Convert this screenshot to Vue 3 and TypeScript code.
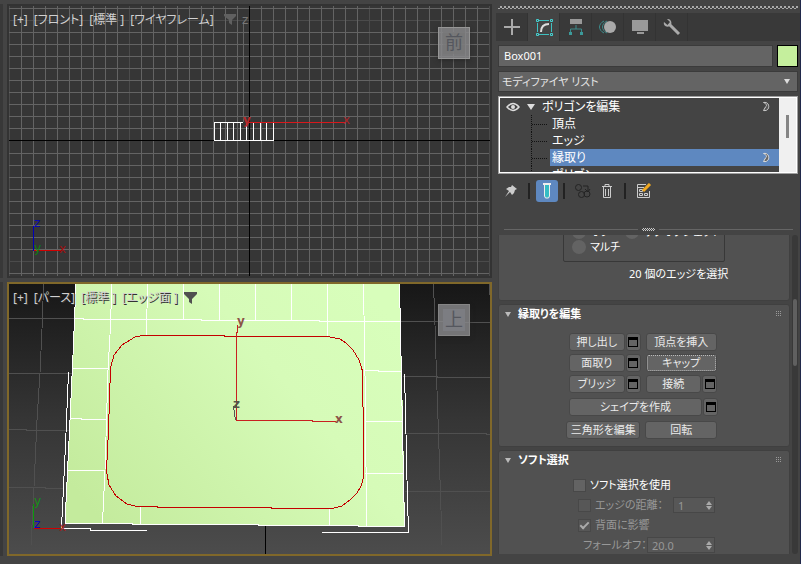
<script setup lang="ts">
import { ref } from 'vue'

interface Sub { name: string; selected: boolean }

const range = (from: number, to: number, step: number): number[] => {
  const out: number[] = []
  for (let v = from; v <= to; v += step) out.push(v)
  return out
}

// Front view grid: the origin lies at (249, 140)
const gridX = range(9, 489, 12).filter((x) => x !== 249)
const gridY = [...range(8, 128, 12), ...range(153, 273, 12)]
const isMajorX = (x: number) => (x - 9) % 120 === 0
const isMajorY = (y: number) => y === 20 || y === 261
const boxX = [214, 220, 227, 233, 240, 246, 253, 260, 266, 273]

const frontLabels = ['[+]', '[フロント]', '[標準 ]', '[ワイヤフレーム]']
const perspLabels = ['[+]', '[パース]', '[標準 ]', '[エッジ面 ]']

const objectName = ref('Box001')
const subs: Sub[] = [
  { name: '頂点', selected: false },
  { name: 'エッジ', selected: false },
  { name: '縁取り', selected: true },
  { name: 'ポリゴン', selected: false },
]
const pick = ref('')
const useSoft = ref(false)
const edgeDistance = ref('1')
const falloff = ref('20.0')
</script>

<template>
  <div class="app">
    <div class="strip"><i></i><i></i></div>

    <main class="views">
      <section class="view">
        <svg class="scene" viewBox="9 6 481 270" preserveAspectRatio="xMidYMid slice" shape-rendering="crispEdges">
          <rect x="9" y="6" width="481" height="270" fill="#363636" />
          <rect v-for="x in gridX.filter(isMajorX)" :key="'mx' + x" :x="x" y="6" width="1" height="270" fill="#4b4b4b" />
          <rect v-for="y in gridY.filter(isMajorY)" :key="'my' + y" x="9" :y="y" width="481" height="1" fill="#4b4b4b" />
          <rect v-for="x in gridX.filter((v) => !isMajorX(v))" :key="'x' + x" :x="x" y="6" width="1" height="270" fill="#646464" />
          <rect v-for="y in gridY.filter((v) => !isMajorY(v))" :key="'y' + y" x="9" :y="y" width="480" height="1" fill="#646464" />
          <rect x="249" y="6" width="1" height="270" fill="#000" />
          <rect x="9" y="140" width="481" height="1" fill="#000" />
          <rect x="243" y="22" width="1" height="100" fill="#646464" />
          <g fill="#fff">
            <rect v-for="x in boxX" :key="'b' + x" :x="x" y="122" width="1" height="19" />
            <rect x="214" y="122" width="29" height="1" />
            <rect x="214" y="140" width="60" height="1" />
          </g>
          <rect x="247" y="122" width="98" height="1" fill="#d8181c" />
          <rect x="33" y="226" width="1" height="25" fill="#0000b8" />
          <rect x="34" y="250" width="27" height="1" fill="#d00000" />
          <g class="axis">
            <text x="242" y="24" fill="#777">z</text>
            <text x="243" y="124" fill="#b8292c" class="strong">y</text>
            <text x="343" y="124" fill="#a82428">x</text>
            <text x="34" y="227" fill="#0808b0">z</text>
            <text x="34" y="252" fill="#108010">y</text>
            <text x="59" y="253" fill="#a01010">x</text>
          </g>
        </svg>
        <div class="labels">
          <button v-for="t in frontLabels" :key="t">{{ t }}</button>
          <button class="filter dim" aria-label="フィルタ">
            <svg width="13" height="12" viewBox="0 0 13 12"><path d="M0 0h12v2L8 6v5l-3-2V6L0 2z" /></svg>
          </button>
        </div>
        <button class="cube front"><span>前</span></button>
      </section>

      <section class="view active">
        <svg class="scene" viewBox="9 284 481 270" preserveAspectRatio="xMidYMid slice" shape-rendering="crispEdges">
          <defs>
            <linearGradient id="sky" x1="0" y1="0" x2="0" y2="1">
              <stop offset="0" stop-color="#171717" />
              <stop offset=".5" stop-color="#353535" />
              <stop offset="1" stop-color="#4c4c4c" />
            </linearGradient>
            <linearGradient id="face" x1="0" y1=".8" x2="1" y2=".2">
              <stop offset="0" stop-color="#c4eb9d" />
              <stop offset=".65" stop-color="#d6fbb8" />
              <stop offset="1" stop-color="#d8febb" />
            </linearGradient>
          </defs>
          <rect x="9" y="284" width="481" height="270" fill="url(#sky)" />
          <g fill="none" stroke="#505050">
            <path d="M9 318.500H75M9 373.500H72M9 429.500H26V430.500H70M9 487.500H45V488.500H64" />
            <path d="M43.500 284L42.500 318L40 373L37 420L34 487L31 545" />
            <path d="M399 321.500H464V322.500H490M403 376.500H437V377.500H490M404 433.500H486V434.500H490M405 491.500H490" />
            <path d="M433.500 284L435 325L436.500 376L438.500 433L441 510L442 545M489.500 284V295" />
          </g>
          <path d="M265.500 525V554" stroke="#000" />
          <path d="M76 284H399L402 374L405 526L65 524L70 420Z" fill="url(#face)" />
          <g fill="none" stroke="#fff">
            <path d="M76 284L73 355L70 420L65 523.500M399.500 284L400.500 330L402.500 430L404.500 526" />
            <path d="M68.500 372L65.500 445L61.500 528M404.500 374L405.500 410L407 480L408.500 532.500" />
            <path d="M65 523.500H132V524.500H258V525.500H358V526.500H405" />
            <path d="M61 528.500H90V530.500H147M322 532.500H409" />
            <path d="M112 284L110 335L108 370L106.500 420L105 470L102.500 523" />
            <path d="M147.500 284L146.500 335M183.500 284V319M219.500 284V320M255.500 284V320M291.500 284V320M327.500 284V336M363.500 284L364.500 345L365.500 405L366.500 526" />
            <path d="M75 318.500H83V319.500H201V320.500H319V321.500H400" />
            <path d="M73 368.500H109M70 418.500H81V419.500H106M67 470.500H105M364 370.500H378V371.500H402M366 421.500H403M365 473.500H404" />
            <path d="M140.500 507V524M329.500 508V525" />
          </g>
          <path
            d="M143 335.500H224V336.500H328L340 339L346 343L353 350L359 360L362.500 371V406L363.500 408V470L364 476L361 486L357 493L350 500L342 506L332 508.500H271V507.500H157V506.500H137L127 504L116 496L109 485L106.500 471L108.500 430L110.500 368L114 355L122 345L135 337Z"
            fill="none" stroke="#c40000"
          />
          <path d="M237.500 325V332H236.500V420.500H312V421.500H336" fill="none" stroke="#c82020" />
          <path d="M233.500 406L235.500 420" stroke="#555" />
          <path d="M33.500 504V528" stroke="#0a9a0a" />
          <path d="M34 528.500H60" stroke="#d00000" />
          <g class="axis">
            <text x="237" y="325" fill="#8c5348" class="strong">y</text>
            <text x="233" y="408" fill="#505548" class="strong">z</text>
            <text x="335" y="423" fill="#8c5348" class="strong">x</text>
            <text x="34" y="505" fill="#189018">y</text>
            <text x="34" y="528" fill="#0808c0">z</text>
            <text x="59" y="531" fill="#a01818">x</text>
          </g>
        </svg>
        <div class="labels shaded">
          <button v-for="t in perspLabels" :key="t">{{ t }}</button>
          <button class="filter" aria-label="フィルタ">
            <svg width="13" height="12" viewBox="0 0 13 12"><path d="M0 0h13v2L8 7v5l-3-2V7L0 2z" /></svg>
          </button>
        </div>
        <button class="cube top"><span>上</span></button>
      </section>
    </main>

    <aside class="panel">
      <div class="grip"></div>
      <nav class="tabs">
        <button aria-label="作成">
          <svg width="20" height="20"><path d="M10 2v16M2 10h16" stroke="#aaa" stroke-width="2" /></svg>
        </button>
        <button class="on" aria-label="修正">
          <svg width="20" height="20" fill="none">
            <path d="M5 3.500h10M5 17.500h10M3.500 6v9M17.500 6v9" stroke="#3fc0c0" />
            <path d="M2.500 2.500h2v2h-2zM16.500 2.500h2v2h-2zM2.500 16.500h2v2h-2zM16.500 16.500h2v2h-2z" stroke="#45d0d0" />
            <path d="M7 15C7 10 9 7 15 7" stroke="#ddd" stroke-width="2" />
          </svg>
        </button>
        <button aria-label="階層">
          <svg width="20" height="20">
            <path d="M4 2h12v5H4z" fill="#999" />
            <path d="M10 8v4M4.500 16v-4h11v4" fill="none" stroke="#3c8c8c" />
            <path d="M3 15h3v3H3zM14 15h3v3h-3z" fill="#3c9a9a" />
          </svg>
        </button>
        <button aria-label="モーション">
          <svg width="20" height="20" fill="none">
            <path d="M6 4C0 7 0 13 6 16M9 4C3 7 3 13 9 16" stroke="#3c8c8c" />
            <circle cx="12" cy="10" r="6" fill="#aaa" />
          </svg>
        </button>
        <button aria-label="表示">
          <svg width="20" height="20" fill="#999"><path d="M2 3h16v11H2zM7 15h7v2H7z" /></svg>
        </button>
        <button aria-label="ユーティリティ">
          <svg width="20" height="20">
            <path d="M7 7l10 10" stroke="#aaa" stroke-width="3" />
            <path d="M5 2L8 5L5.500 8L2 5C1 8 4 11 8 9C11 7 9 1 5 2Z" fill="#aaa" />
          </svg>
        </button>
      </nav>

      <div class="name-row">
        <input v-model="objectName" type="text" aria-label="オブジェクト名" />
        <button class="swatch" aria-label="オブジェクトカラー"></button>
      </div>

      <div class="drop">
        <select v-model="pick" aria-label="モディファイヤ リスト">
          <option value="">モディファイヤ リスト</option>
        </select>
        <svg width="6" height="5"><path d="M0 0h6L3 5z" fill="#ddd" /></svg>
      </div>

      <div class="stack">
        <ul>
          <li class="root">
            <svg class="eye" width="14" height="10" viewBox="0 0 14 10">
              <path d="M1 5Q7-2 13 5Q7 12 1 5Z" fill="none" stroke="#ddd" stroke-width="1.500" />
              <circle cx="7" cy="5" r="2" fill="#ddd" />
            </svg>
            <svg class="tri" width="8" height="6"><path d="M0 0h8L4 6z" fill="#ddd" /></svg>
            <button>ポリゴンを編集</button>
            <svg class="moon" width="8" height="11"><path d="M1.500 1.500C5 3 5 5 3.500 6L1.500 9.500C8.500 11 8.500 0 1.500 1.500Z" fill="#555" stroke="#ccc" /></svg>
          </li>
          <li v-for="s in subs" :key="s.name" class="sub">
            <i></i>
            <button :class="{ on: s.selected }">{{ s.name }}
              <svg v-if="s.selected" class="moon" width="8" height="11"><path d="M1.500 1.500C5 3 5 5 3.500 6L1.500 9.500C8.500 11 8.500 0 1.500 1.500Z" fill="#666" stroke="#ddd" /></svg>
            </button>
          </li>
        </ul>
        <div class="bar"><i></i></div>
      </div>

      <div class="tools">
        <button aria-label="スタックを固定">
          <svg width="16" height="16"><path d="M9 2l5 4-2 1-1 3-2 2-2-3-5 5 4-6-3-2 3-2 2 0z" fill="#ccc" /></svg>
        </button>
        <b></b>
        <button class="on" aria-label="最終結果を表示">
          <svg width="10" height="16"><path d="M2.500 1v12l1 2h3l1-2V1z" fill="#35bcc4" stroke="#eee" /><path d="M1 1h8" stroke="#eee" stroke-width="2" /></svg>
        </button>
        <b></b>
        <button aria-label="固有にする">
          <svg width="18" height="16" fill="none" stroke="#232323"><circle cx="4.500" cy="4.500" r="3" /><circle cx="7.500" cy="11.500" r="3" /><circle cx="13" cy="11" r="3" /><path d="M9 3h5v5M11 6l3 3 2-3" /></svg>
        </button>
        <button aria-label="モディファイヤを除去">
          <svg width="12" height="16" fill="none" stroke="#ccc"><path d="M1 3.500h10M4 3V1.500h4V3M2.500 4v10.500h7V4M4.500 6v7M7.500 6v7" /></svg>
        </button>
        <b></b>
        <button aria-label="モディファイヤ セットを設定">
          <svg width="16" height="16" fill="none" stroke="#ccc"><path d="M10 1.500H1.500v13h12V8M2 4.500h6M3.500 6.500h3v2h-3zM3.500 10.500h3v2h-3zM8.500 10.500h3v2h-3z" /><path d="M7 8l7-7" stroke="#f0a820" stroke-width="3" /></svg>
        </button>
      </div>

      <div class="splitter"><i></i><span></span><i></i></div>

      <div class="scroller">
        <div class="rolls">
          <section class="roll selection">
            <div class="group">
              <label><input type="radio" name="preview" />オフ</label>
              <label><input type="radio" name="preview" />サブオブジェクト</label>
              <label><input type="radio" name="preview" />マルチ</label>
            </div>
            <p>20 個のエッジを選択</p>
          </section>

          <section class="roll">
            <h2><svg width="6" height="5"><path d="M0 0h6L3 5z" /></svg>縁取りを編集<span class="dots"></span></h2>
            <div class="edit">
              <div class="pair">
                <div class="half"><button>押し出し</button><button class="mini" aria-label="押し出し設定"></button></div>
                <div class="half"><button>頂点を挿入</button></div>
              </div>
              <div class="pair">
                <div class="half"><button>面取り</button><button class="mini" aria-label="面取り設定"></button></div>
                <div class="half"><button class="focus">キャップ</button></div>
              </div>
              <div class="pair">
                <div class="half"><button>ブリッジ</button><button class="mini" aria-label="ブリッジ設定"></button></div>
                <div class="half"><button>接続</button><button class="mini" aria-label="接続設定"></button></div>
              </div>
              <div class="pair spaced">
                <div class="full"><button>シェイプを作成</button><button class="mini" aria-label="シェイプ設定"></button></div>
              </div>
              <div class="pair wide">
                <div class="half first"><button>三角形を編集</button></div>
                <div class="half"><button>回転</button></div>
              </div>
            </div>
          </section>

          <section class="roll soft">
            <h2><svg width="6" height="5"><path d="M0 0h6L3 5z" /></svg>ソフト選択<span class="dots"></span></h2>
            <div class="line"><label><input v-model="useSoft" type="checkbox" />ソフト選択を使用</label></div>
            <div class="line inner">
              <label><input type="checkbox" disabled />エッジの距離：</label>
              <div class="spin short"><input v-model="edgeDistance" type="text" disabled aria-label="エッジの距離" /><svg width="6" height="9"><path d="M0 4h6L3 0zM0 5h6L3 9z" /></svg></div>
            </div>
            <div class="line inner"><label><input type="checkbox" checked disabled />背面に影響</label></div>
            <div class="line fall">
              <label for="falloff">フォールオフ：</label>
              <div class="spin"><input id="falloff" v-model="falloff" type="text" disabled /><svg width="6" height="9"><path d="M0 4h6L3 0zM0 5h6L3 9z" /></svg></div>
            </div>
          </section>
        </div>
        <div class="track"><i></i></div>
      </div>
    </aside>
  </div>
</template>

<style>
body { background: #444; }
</style>

<style scoped>
*, *::before, *::after { box-sizing: border-box; }
.app {
  display: grid;
  grid-template-columns: 3px minmax(0, 1fr) 309px;
  height: 100vh;
  overflow: hidden;
  background: #444;
  color: #fff;
  font: 11px/16px "Noto Sans", "Noto Sans CJK JP", sans-serif;
  font-feature-settings: "palt";
}
button, input, select {
  margin: 0;
  padding: 0;
  border: 0;
  color: inherit;
  font: inherit;
  font-feature-settings: inherit;
  background: none;
}
button { white-space: nowrap; }
svg { display: block; }

.strip { display: flex; flex-direction: column; gap: 4px; padding: 4px 0 8px; }
.strip i { flex: 1; background: #383838; }
.views { display: flex; flex-direction: column; gap: 4px; min-width: 0; padding: 4px 0 8px 4px; }
.view { position: relative; flex: 1; min-height: 0; border: 2px solid #333; }
.view.active { border-color: #80682a; }
.scene { width: 100%; height: 100%; }
.axis { font: 12px "DejaVu Sans", sans-serif; }
.strong { font-weight: bold; }
.labels { position: absolute; top: 6px; left: 4px; display: flex; gap: 6px; align-items: center; }
.labels button { color: #d0d0d0; font-size: 12px; }
.shaded button { text-shadow: 1px 1px #333; }
.filter svg { fill: #505050; }
.labels .dim { margin-left: 4px; }
.dim svg { fill: #606060; }
.cube {
  position: absolute;
  top: 21px;
  right: 20px;
  width: 32px;
  height: 32px;
  padding: 4px;
  border: 1px solid #969696;
  background: #88888ad0;
  color: #55575e;
  box-shadow: 0 2px 4px #2228;
}
.cube span { display: block; height: 22px; background: #7779; font-size: 18px; line-height: 21px; }
.cube.top { top: 20px; border-color: #858585; }
.cube.top span { background: #7c7d82; }

.panel {
  display: flex;
  flex-direction: column;
  min-height: 0;
  padding: 6px 2px 10px 6px;
  border-right: 1px solid #20284a;
}
.grip {
  flex: none;
  height: 3px;
  background: conic-gradient(#aaa 25%, #0000 0 50%, #aaa 0 75%, #0000 0) 0 0 / 4px 4px;
}
.tabs { display: flex; flex: none; height: 28px; margin: 4px -2px 4px; background: #393939; }
.tabs button { display: grid; place-items: center; width: 32px; border-right: 1px solid #333; }
.tabs .on { background: #444; }
.name-row { display: flex; flex: none; gap: 4px; height: 22px; }
.name-row input { flex: 1; min-width: 0; padding: 0 5px; border: 1px solid #3b3b3b; background: #646464; }
.swatch { width: 21px; border: 1px solid #000; background: #c5ef9d; }
.drop { position: relative; flex: none; height: 21px; margin: 4px 0; }
.drop select { width: 100%; height: 100%; padding: 0 3px; border: 1px solid #3b3b3b; background: #646464; appearance: none; color: #e4e4e4; }
.drop svg { position: absolute; right: 8px; top: 8px; }

.stack { display: flex; flex: none; height: 78px; border: 1px solid #a0a0a0; outline: 1px solid #fff; outline-offset: -2px; padding: 1px; }
.stack ul { flex: 1; margin: 0; padding: 0; overflow: hidden; list-style: none; }
.stack li { display: flex; align-items: center; height: 17px; }
.root { gap: 7px; padding: 0 9px 0 6px; }
.moon { margin-left: auto; }
.sub { padding-left: 31px; }
.sub i { width: 17px; height: 17px; border-left: 1px dotted #111; background: linear-gradient(90deg, #111 50%, #0000 0) 0 9px / 2px 1px repeat-x; }
.sub button { display: flex; flex: 1; align-items: center; height: 17px; margin-left: 2px; padding: 0 9px 0 2px; text-align: left; }
.stack button { font-size: 12px; }
.sub .on { background: #5e88c0; }
.bar { width: 17px; padding: 17px 7px; background: #f0f0f0; }
.bar i { display: block; width: 3px; height: 23px; background: #858585; }

.tools { display: flex; flex: none; align-items: center; height: 22px; margin-top: 6px; padding-left: 1px; }
.tools button { display: grid; place-items: center; width: 24px; height: 22px; }
.tools .on { width: 22px; border-radius: 3px; background: #5e88c0; }
.tools b { width: 2px; height: 16px; margin: 0 6px 0 5px; background: #222; }
.splitter { display: flex; flex: none; gap: 4px; align-items: center; height: 4px; margin: 25px 5px 4px 6px; }
.splitter i { flex: 1; height: 1px; background: #656565; }
.splitter span { width: 13px; height: 3px; background: conic-gradient(#ccc 25%, #0000 0 50%, #ccc 0 75%, #0000 0) 0 0 / 2px 2px; }

.scroller { display: flex; flex: 1; gap: 2px; min-height: 0; overflow: hidden; }
.rolls { display: flex; flex: 1; flex-direction: column; gap: 3px; overflow: hidden; }
.roll { flex: none; border: 1px solid #404040; border-radius: 3px; background: #515151; }
.selection { height: 89px; margin-top: -23px; }
.group { display: grid; grid-template-columns: 53px 1fr; grid-auto-rows: 15px; width: 162px; height: 49px; margin-left: 64px; padding: 10px 8px; border: 1px solid #383838; border-radius: 2px; }
.group label { display: flex; gap: 4px; align-items: center; white-space: nowrap; }
.group input { flex: none; width: 14px; height: 14px; border-radius: 50%; background: #636363; appearance: none; }
.selection p { margin: 4px 0 0 130px; }
.roll h2 { display: flex; gap: 7px; align-items: center; height: 18px; margin: 0; padding: 0 7px 0 6px; font-size: 11px; }
.roll h2 svg { fill: #bbb; }
.dots { width: 6px; height: 6px; margin-left: auto; background: conic-gradient(#0000 75%, #999 0) 0 0 / 2px 2px; }
.edit { display: flex; flex-direction: column; gap: 3px; padding: 10px 72px 7px 70px; }
.pair { display: flex; gap: 5px; height: 18px; }
.spaced, .wide { margin-top: 2px; }
.wide { margin-left: -3px; }
.half { display: flex; gap: 1px; width: 72px; }
.half.first { width: 75px; }
.full { display: flex; flex: none; gap: 1px; width: 149px; }
.edit button { flex: 1; border: 1px solid #484848; border-radius: 3px; background: #646464; color: #eaeaea; line-height: 14px; }
.edit .focus { outline: 1px dotted #bbb; outline-offset: -2px; }
.edit .mini { display: grid; flex: none; place-items: center; width: 15px; }
.mini::before { width: 10px; height: 10px; border: 1px solid #000; border-top-width: 3px; content: ""; }

.soft { height: 150px; }
.line { display: flex; align-items: center; justify-content: space-between; height: 20px; padding: 0 74px; color: #fff; }
.soft h2 + .line { margin-top: 6px; }
.line label { display: flex; gap: 4px; align-items: center; white-space: nowrap; }
.line input[type="checkbox"] { display: grid; place-items: center; width: 13px; height: 13px; border: 1px solid #484848; background: #636363; appearance: none; }
.line.inner { padding-left: 79px; color: #989898; }
.inner input[type="checkbox"] { background: #575757; }
.inner input:checked::after { width: 9px; height: 5px; margin-top: -2px; border: solid #aaa; border-width: 0 0 2px 2px; transform: rotate(-45deg); content: ""; }
.line.fall { padding-left: 84px; color: #989898; }
.spin { position: relative; flex: none; width: 68px; height: 16px; }
.spin.short { width: 42px; }
.spin input { display: block; width: 100%; height: 100%; padding: 0 4px; border: 1px solid #474747; background: #575757; }
.spin svg { position: absolute; top: 4px; right: 3px; fill: #aaa; }
.track { width: 6px; padding: 64px 1px; border-radius: 3px; background: #393939; }
.track i { display: block; height: 67px; border-radius: 2px; background: #606060; }
</style>
